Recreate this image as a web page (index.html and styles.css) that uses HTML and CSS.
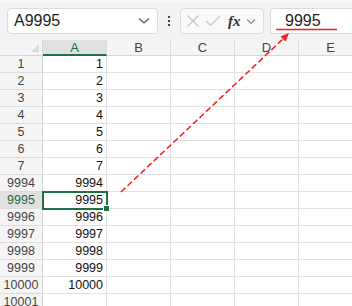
FILE: index.html
```html
<!DOCTYPE html>
<html lang="ja">
<head>
  <meta charset="UTF-8">
  <meta name="viewport" content="width=device-width, initial-scale=1.0">
  <title>Excel</title>
  <link rel="stylesheet" href="styles.css">
</head>
<body>
  <div class="app">
    <div class="toolbar">
      <div class="name-box">
        <span class="name-text">A9995</span>
        <svg class="chevron" width="12" height="8" viewBox="0 0 12 8"><path d="M1 1.5 L6 6 L11 1.5" fill="none" stroke="#555" stroke-width="1.2"/></svg>
      </div>
      <div class="kebab"><span></span><span></span><span></span></div>
      <div class="fx-group">
        <svg width="14" height="14" viewBox="0 0 14 14"><path d="M1.5 1.5 L12.5 12.5 M12.5 1.5 L1.5 12.5" stroke="#c4c4c4" stroke-width="1.2"/></svg>
        <svg width="16" height="14" viewBox="0 0 16 14"><path d="M1 7 L5.5 11.5 L15 2" fill="none" stroke="#c4c4c4" stroke-width="1.2"/></svg>
        <span class="fx">fx</span>
        <svg width="10" height="7" viewBox="0 0 10 7"><path d="M1 1.5 L5 5.5 L9 1.5" fill="none" stroke="#888" stroke-width="1.1"/></svg>
      </div>
      <div class="formula">
        <span class="formula-text">9995</span>
      </div>
    </div>

    <div class="sheet">
      <div class="corner"><span class="tri"></span></div>
      <div class="col-head selected">A</div>
      <div class="col-head">B</div>
      <div class="col-head">C</div>
      <div class="col-head">D</div>
      <div class="col-head">E</div>

      <div class="row-head">1</div><div class="cell">1</div><div class="cell"></div><div class="cell"></div><div class="cell"></div><div class="cell"></div>
      <div class="row-head">2</div><div class="cell">2</div><div class="cell"></div><div class="cell"></div><div class="cell"></div><div class="cell"></div>
      <div class="row-head">3</div><div class="cell">3</div><div class="cell"></div><div class="cell"></div><div class="cell"></div><div class="cell"></div>
      <div class="row-head">4</div><div class="cell">4</div><div class="cell"></div><div class="cell"></div><div class="cell"></div><div class="cell"></div>
      <div class="row-head">5</div><div class="cell">5</div><div class="cell"></div><div class="cell"></div><div class="cell"></div><div class="cell"></div>
      <div class="row-head">6</div><div class="cell">6</div><div class="cell"></div><div class="cell"></div><div class="cell"></div><div class="cell"></div>
      <div class="row-head">7</div><div class="cell">7</div><div class="cell"></div><div class="cell"></div><div class="cell"></div><div class="cell"></div>
      <div class="row-head">9994</div><div class="cell">9994</div><div class="cell"></div><div class="cell"></div><div class="cell"></div><div class="cell"></div>
      <div class="row-head selected">9995</div><div class="cell active">9995</div><div class="cell"></div><div class="cell"></div><div class="cell"></div><div class="cell"></div>
      <div class="row-head">9996</div><div class="cell">9996</div><div class="cell"></div><div class="cell"></div><div class="cell"></div><div class="cell"></div>
      <div class="row-head">9997</div><div class="cell">9997</div><div class="cell"></div><div class="cell"></div><div class="cell"></div><div class="cell"></div>
      <div class="row-head">9998</div><div class="cell">9998</div><div class="cell"></div><div class="cell"></div><div class="cell"></div><div class="cell"></div>
      <div class="row-head">9999</div><div class="cell">9999</div><div class="cell"></div><div class="cell"></div><div class="cell"></div><div class="cell"></div>
      <div class="row-head">10000</div><div class="cell">10000</div><div class="cell"></div><div class="cell"></div><div class="cell"></div><div class="cell"></div>
      <div class="row-head">10001</div><div class="cell"></div><div class="cell"></div><div class="cell"></div><div class="cell"></div><div class="cell"></div>
    </div>

    <!-- annotation drawn over the sheet -->
    <svg class="annotation" width="352" height="306" viewBox="0 0 352 306">
      <line x1="276" y1="29.5" x2="337" y2="29.5" stroke="#ff1a1a" stroke-width="1.4"/>
      <line x1="121" y1="192" x2="284" y2="38" stroke="#ff1a1a" stroke-width="1.5" stroke-dasharray="6 3"/>
      <path d="M289 33 L280.5 36.5 L285.5 41.5 Z" fill="#ff1a1a"/>
    </svg>
  </div>
</body>
</html>
```

FILE: styles.css
```css
body {
  margin: 0;
  padding: 0;
  font-family: 'Liberation Sans', Arial, 'Noto Sans CJK JP', sans-serif;
  color: #222222;
  background: #ffffff;
  overflow: hidden;
}

.app {
  position: relative;
  width: 352px;
  height: 306px;
  overflow: hidden;
}

.toolbar {
  height: 40px;
  box-sizing: border-box;
  background: #f3f3f3;
  border-top: 2px solid #f8f8f8;
  display: flex;
  align-items: center;
  padding-left: 7px;
}

.name-box {
  width: 151px;
  height: 26px;
  box-sizing: border-box;
  background: #ffffff;
  border: 1px solid #dadada;
  border-radius: 4px;
  display: flex;
  align-items: center;
  justify-content: space-between;
  padding: 0 7px 0 6px;
}

.name-text {
  font-size: 16px;
  color: #1e1e1e;
}

.kebab {
  width: 22px;
  display: flex;
  flex-direction: column;
  align-items: center;
  gap: 2px;
}

.kebab span {
  width: 2px;
  height: 2px;
  background: #444444;
}

.fx-group {
  width: 84px;
  height: 26px;
  box-sizing: border-box;
  background: #fafafa;
  border: 1px solid #dcdcdc;
  border-radius: 4px;
  display: flex;
  align-items: center;
  gap: 5px;
  padding-left: 5px;
}

.fx {
  font-family: 'Liberation Serif', 'Times New Roman', serif;
  font-style: italic;
  font-weight: bold;
  font-size: 15px;
  color: #333333;
  margin-left: 2px;
}

.formula {
  flex: 1;
  height: 26px;
  box-sizing: border-box;
  margin-left: 6px;
  background: #ffffff;
  border: 1px solid #dadada;
  border-right: none;
  border-radius: 4px 0 0 4px;
  display: flex;
  align-items: center;
  padding-left: 14px;
}

.formula-text {
  font-size: 16px;
  color: #1e1e1e;
}

.sheet {
  display: grid;
  grid-template-columns: 43px 64px 64px 64px 64px 64px;
  grid-template-rows: 16px;
  grid-auto-rows: 17px;
  font-size: 12.5px;
}

.corner, .col-head, .row-head {
  background: #f5f5f5;
  box-sizing: border-box;
  color: #444444;
}

.corner {
  position: relative;
  border-right: 1px solid #d6d6d6;
  border-bottom: 1px solid #d6d6d6;
}

.corner .tri {
  position: absolute;
  right: 3px;
  bottom: 3px;
  width: 0;
  height: 0;
  border-left: 8px solid transparent;
  border-bottom: 8px solid #dcdcdc;
}

.col-head {
  border-right: 1px solid #dcdcdc;
  border-bottom: 1px solid #d6d6d6;
  text-align: center;
  font-size: 13px;
  line-height: 16px;
}

.col-head.selected {
  background: #e1e1e1;
  color: #1a6b3f;
  border-bottom: 2px solid #1e7145;
  line-height: 15px;
}

.row-head {
  border-right: 1px solid #d6d6d6;
  border-bottom: 1px solid #dcdcdc;
  text-align: center;
  line-height: 16px;
}

.row-head.selected {
  background: #e1e1e1;
  color: #1a6b3f;
}

.cell {
  box-sizing: border-box;
  border-right: 1px solid #e1e1e1;
  border-bottom: 1px solid #e1e1e1;
  text-align: right;
  padding-right: 3px;
  line-height: 16px;
  color: #111111;
}

.cell.active {
  position: relative;
  outline: 2px solid #1e7145;
  outline-offset: -1px;
  z-index: 1;
}

.cell.active::after {
  content: '';
  position: absolute;
  right: -4px;
  bottom: -4px;
  width: 5px;
  height: 5px;
  background: #1e7145;
  border: 1px solid #ffffff;
}

.annotation {
  position: absolute;
  top: 0;
  left: 0;
  pointer-events: none;
}
```
